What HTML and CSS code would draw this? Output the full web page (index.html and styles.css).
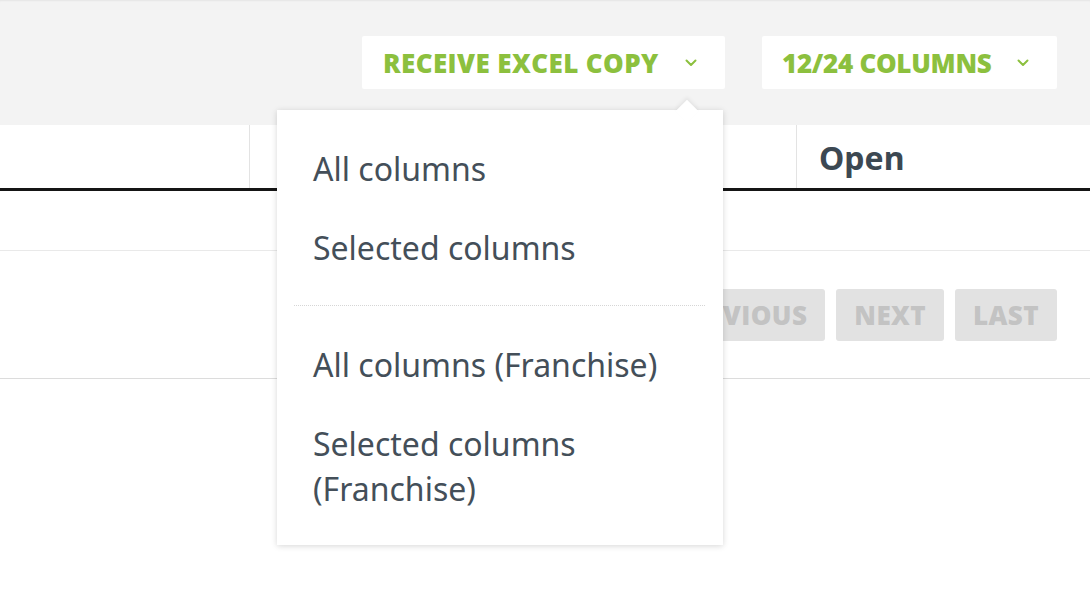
FILE: index.html
```html
<!DOCTYPE html>
<html>
<head>
<meta charset="utf-8">
<link rel="stylesheet" href="styles.css">
</head>
<body>
<div class="page">
  <div class="toolbar">
    <div class="tb-wrap">
      <button class="tb-btn excel">RECEIVE EXCEL COPY
        <svg class="chev" viewBox="0 0 12 8" width="12" height="8"><path d="M1.5 1.5 L6 6 L10.5 1.5" fill="none" stroke="#8cc03e" stroke-width="2" stroke-linecap="round" stroke-linejoin="round"/></svg>
      </button>
      <div class="menu">
        <div class="item">All columns</div>
        <div class="item">Selected columns</div>
        <div class="sep"></div>
        <div class="item">All columns (Franchise)</div>
        <div class="item">Selected columns (Franchise)</div>
      </div>
    </div>
    <button class="tb-btn cols">12/24 COLUMNS
      <svg class="chev" viewBox="0 0 12 8" width="12" height="8"><path d="M1.5 1.5 L6 6 L10.5 1.5" fill="none" stroke="#8cc03e" stroke-width="2" stroke-linecap="round" stroke-linejoin="round"/></svg>
    </button>
  </div>
  <div class="table">
    <div class="thead">
      <div class="th c1"></div>
      <div class="th c2"></div>
      <div class="th c3">Open</div>
    </div>
    <div class="row"></div>
    <div class="pager">
      <button class="pg">FIRST</button>
      <button class="pg">PREVIOUS</button>
      <button class="pg">NEXT</button>
      <button class="pg">LAST</button>
    </div>
  </div>
</div>
</body>
</html>
```

FILE: styles.css
```css
* { box-sizing: border-box; }
html, body { margin: 0; padding: 0; background: #fff; }
body { font-family: "Noto Sans", sans-serif; width: 1090px; height: 616px; overflow: hidden; }

.toolbar {
  height: 125px;
  background: #f3f3f3;
  box-shadow: inset 0 2px 2px -1px rgba(0,0,0,0.06);
  display: flex;
  justify-content: flex-end;
  align-items: flex-start;
  padding: 36px 33px 0 0;
  gap: 37px;
}
.tb-wrap { position: relative; }
.tb-btn {
  height: 53px;
  background: #fff;
  border: none;
  border-radius: 2px;
  display: flex;
  align-items: center;
  font-family: "Open Sans", sans-serif;
  font-weight: 800;
  font-size: 26px;
  letter-spacing: 0.4px;
  color: #8cc03e;
  padding: 0 0 0 21px;
  margin: 0;
}
.excel { width: 363px; }
.cols { width: 295px; letter-spacing: -0.3px; padding-left: 20px; }
.excel .chev { margin-left: 26px; }
.cols .chev { margin-left: 25px; }

.menu {
  position: absolute;
  left: -85px;
  top: 74px;
  width: 446px;
  height: 435px;
  background: #fff;
  box-shadow: 0 1px 6px rgba(0,0,0,0.16);
  padding: 18.5px 0 17.5px 0;
  z-index: 5;
  color: #444f59;
  font-family: "Noto Sans", sans-serif;
  font-size: 32px;
  line-height: 45px;
}
.menu::before {
  content: "";
  position: absolute;
  top: -7px;
  left: 402px;
  width: 16px;
  height: 16px;
  background: #fff;
  transform: rotate(45deg);
  box-shadow: -2px -2px 4px rgba(0,0,0,0.06);
}
.item {
  position: relative;
  padding: 17px 20px 17px 36px;
}
.sep {
  margin: 18.5px 18px 19px 17px;
  border-top: 1px dotted #d6d6d6;
}

.table { background: #fff; }
.thead {
  display: flex;
  height: 66px;
  border-bottom: 3px solid #151515;
}
.th { height: 63px; }
.c1 { width: 250px; border-right: 1px solid #e3e3e3; }
.c2 { width: 547px; border-right: 1px solid #e3e3e3; }
.c3 {
  flex: 1;
  padding-left: 22px;
  font-weight: 700;
  font-size: 32px;
  line-height: 66px;
  color: #3c4852;
}
.row { height: 60px; border-bottom: 1px solid #e9e9e9; }
.pager {
  height: 128px;
  border-bottom: 1px solid #dcdcdc;
  display: flex;
  justify-content: flex-end;
  align-items: flex-start;
  padding: 38px 33px 0 0;
  gap: 11px;
}
.pg {
  height: 52px;
  background: #e2e2e2;
  border: none;
  border-radius: 3px;
  font-family: "Open Sans", sans-serif;
  font-weight: 800;
  font-size: 26px;
  letter-spacing: 0.4px;
  color: #c3c3c3;
  padding: 0 18px;
  margin: 0;
}
```
